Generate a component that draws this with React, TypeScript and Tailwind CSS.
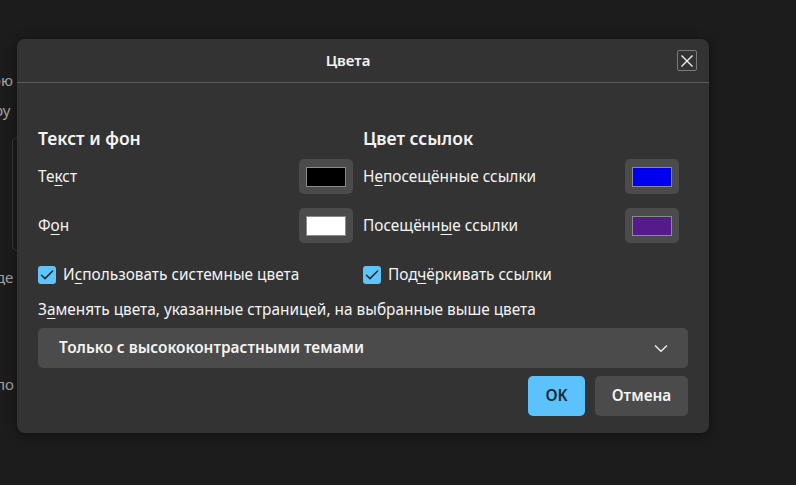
import React from "react";

function Swatch({ color }: { color: string }) {
  return (
    <button className="w-[54px] h-[35px] rounded-[5px] bg-[#4b4b4b] flex items-center justify-center shrink-0">
      <span className="block w-[40px] h-[20px] border border-[#8a8a8a]" style={{ backgroundColor: color }} />
    </button>
  );
}

function Check() {
  return (
    <span className="w-[18px] h-[18px] rounded-[3px] bg-[#5ec4fa] flex items-center justify-center shrink-0">
      <svg width="14" height="14" viewBox="0 0 14 14" fill="none">
        <path d="M1.5 7.2 L5 10.6 L12.6 3" stroke="#1c2a33" strokeWidth="1.5" strokeLinecap="round" strokeLinejoin="round" />
      </svg>
    </span>
  );
}

function U({ children }: { children: React.ReactNode }) {
  return <span className="underline underline-offset-[3px] decoration-1">{children}</span>;
}

export default function App() {
  return (
    <div
      className="relative w-[796px] h-[485px] bg-[#1c1c1c] overflow-hidden text-[#f3f3f3]"
      style={{ fontFamily: '"Noto Sans", "Open Sans", sans-serif' }}
    >
      {/* background page content (partially hidden behind the dialog) */}
      <div className="flex flex-col text-[15px] text-[#a3a3a3] pt-[69px]">
        <div className="h-[22px] leading-[22px] -ml-[8px]">ою</div>
        <div className="h-[22px] leading-[22px] mt-[8px] -ml-[6px]">ру</div>
        <div className="mt-[16px] ml-[12px] w-[40px] h-[114px] border border-[#3a3a3a] rounded-[5px]" />
        <div className="h-[22px] leading-[22px] mt-[15px] -ml-[4px]">де</div>
        <div className="h-[22px] leading-[22px] mt-[85px] -ml-[4px]">по</div>
      </div>

      {/* dialog */}
      <div className="absolute left-[17px] top-[39px] w-[692px] h-[394px] rounded-[8px] bg-[#333333] shadow-[0_2px_12px_rgba(0,0,0,0.45)] flex flex-col">
        <div className="relative h-[44px] border-b border-[#5a5a5a] flex items-center justify-center pr-[30px]">
          <span className="text-[15px] font-semibold">Цвета</span>
          <button className="absolute right-[12px] top-[11px] w-[20px] h-[21px] border border-[#7a7a7a] rounded-[2px] flex items-center justify-center">
            <svg width="14" height="14" viewBox="0 0 14 14">
              <path d="M1.5 1.5 L12.5 12.5 M12.5 1.5 L1.5 12.5" stroke="#f0f0f0" strokeWidth="1.4" />
            </svg>
          </button>
        </div>

        <div className="px-[21px] pt-[44px] flex flex-col">
          <div className="grid grid-cols-2">
            <div className="flex flex-col pr-[10px]">
              <div className="text-[17.5px] font-semibold leading-[22px]">Текст и фон</div>
              <div className="mt-[10px] flex items-center justify-between">
                <span className="text-[15.4px]">Те<U>к</U>ст</span>
                <Swatch color="#000000" />
              </div>
              <div className="mt-[14px] flex items-center justify-between">
                <span className="text-[15.4px]">Ф<U>о</U>н</span>
                <Swatch color="#ffffff" />
              </div>
              <div className="mt-[23px] flex items-center gap-[7px] h-[18px]">
                <Check />
                <span className="text-[15.4px]">И<U>с</U>пользовать системные цвета</span>
              </div>
            </div>
            <div className="flex flex-col pr-[9px]">
              <div className="text-[17.5px] font-semibold leading-[22px]">Цвет ссылок</div>
              <div className="mt-[10px] flex items-center justify-between">
                <span className="text-[15.4px]">Н<U>е</U>посещённые ссылки</span>
                <Swatch color="#0000ee" />
              </div>
              <div className="mt-[14px] flex items-center justify-between">
                <span className="text-[15.4px]">Посещённ<U>ы</U>е ссылки</span>
                <Swatch color="#551a8b" />
              </div>
              <div className="mt-[23px] flex items-center gap-[7px] h-[18px]">
                <Check />
                <span className="text-[15.4px]">Под<U>ч</U>ёркивать ссылки</span>
              </div>
            </div>
          </div>

          <div className="mt-[16px] text-[15.4px] leading-[20px]">
            З<U>а</U>менять цвета, указанные страницей, на выбранные выше цвета
          </div>

          <div className="mt-[8px] h-[40px] rounded-[5px] bg-[#4b4b4b] flex items-center justify-between pl-[21px] pr-[20px]">
            <span className="text-[15.4px] font-semibold">Только с высококонтрастными темами</span>
            <svg width="14" height="9" viewBox="0 0 14 9" fill="none">
              <path d="M1 1.5 L7 7.3 L13 1.5" stroke="#eeeeee" strokeWidth="1.4" />
            </svg>
          </div>

          <div className="mt-[8px] flex justify-end gap-[10px]">
            <button className="w-[57px] h-[40px] rounded-[5px] bg-[#5bc2fb] text-[#1d2a33] text-[15.4px] font-semibold">OK</button>
            <button className="w-[93px] h-[40px] rounded-[5px] bg-[#4b4b4b] text-[15.4px] font-semibold">Отмена</button>
          </div>
        </div>
      </div>
    </div>
  );
}
